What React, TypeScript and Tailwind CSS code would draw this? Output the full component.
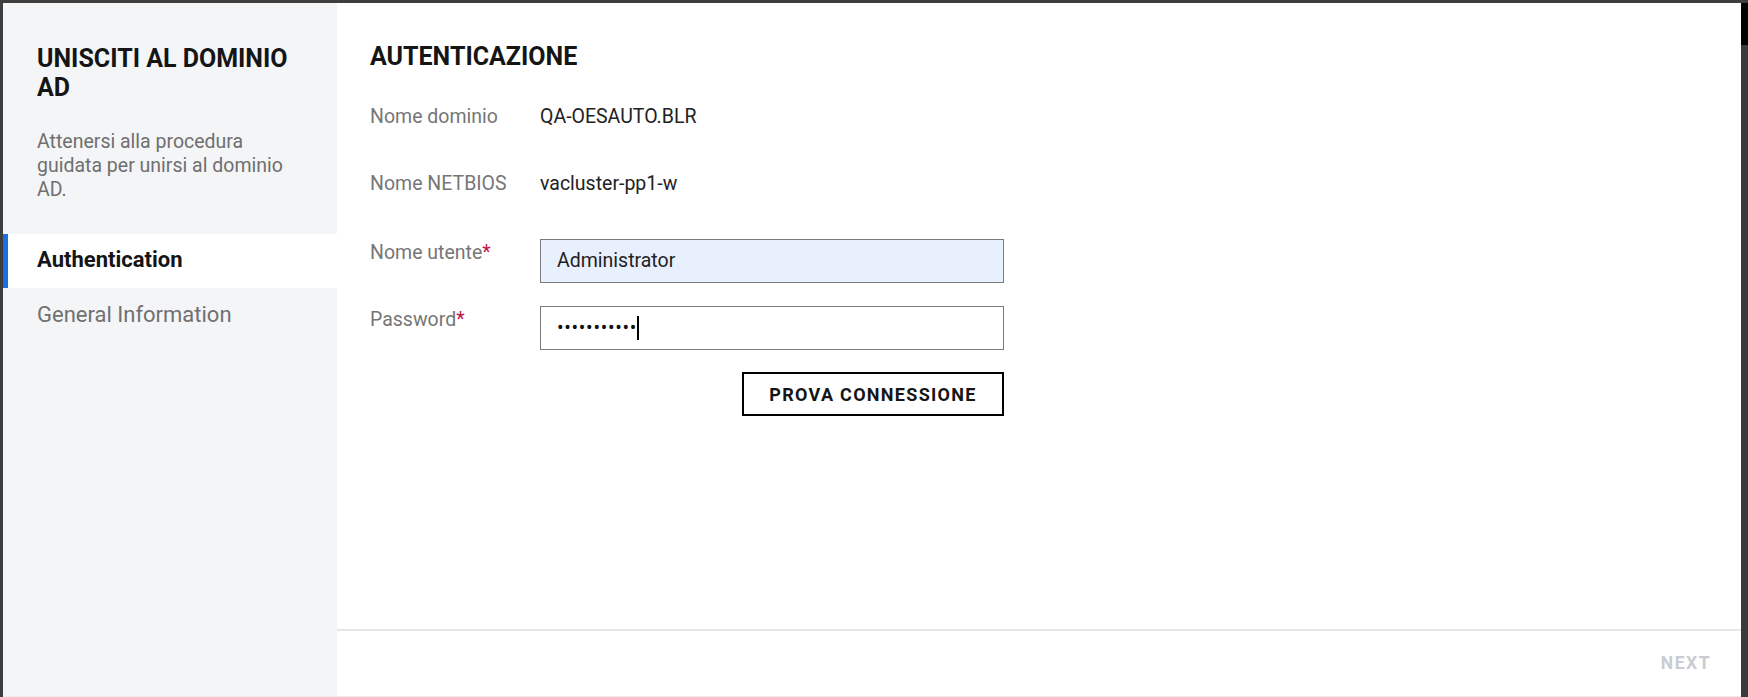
import React from "react";

export default function App() {
  return (
    <div className="w-[1748px] h-[697px] bg-[#3e3e3e] flex pt-[3px] pl-[3px] overflow-hidden" style={{ fontFamily: "Roboto, 'Liberation Sans', sans-serif" }}>
      <div className="flex w-[1738px] h-[694px] border-b border-[#ececec]">
        {/* Sidebar */}
        <aside className="w-[334px] h-full bg-[#f4f5f7] flex flex-col">
          <div className="pt-[41px] pl-[34px] pr-[30px]">
            <h1 className="text-[25px] leading-[29px] font-bold text-[#151515]">UNISCITI AL DOMINIO AD</h1>
            <p className="mt-[28px] text-[19.5px] leading-[24px] text-[#6f6f6f]">Attenersi alla procedura guidata per unirsi al dominio AD.</p>
          </div>
          <nav className="mt-[32px] flex flex-col">
            <div className="h-[54px] bg-white border-l-[5px] border-[#1b6fe0] pl-[29px] pb-[3px] flex items-center text-[22px] font-bold text-[#151515]">Authentication</div>
            <div className="h-[54px] pl-[34px] pb-[2px] flex items-center text-[22px] text-[#707070]">General Information</div>
          </nav>
        </aside>
        {/* Main */}
        <main className="flex-1 h-full bg-white flex flex-col">
          <div className="flex-1 pt-[40px] pl-[33px]">
            <h2 className="text-[25px] leading-[28px] font-bold text-[#151515]">AUTENTICAZIONE</h2>
            <div className="mt-[34px] flex flex-col gap-[43px] text-[19.5px] leading-[24px]">
              <div className="flex">
                <span className="w-[170px] text-[#767676]">Nome dominio</span>
                <span className="text-[#222]">QA-OESAUTO.BLR</span>
              </div>
              <div className="flex">
                <span className="w-[170px] text-[#767676]">Nome NETBIOS</span>
                <span className="text-[#222]">vacluster-pp1-w</span>
              </div>
            </div>
            <div className="mt-[43px] flex flex-col gap-[23px] text-[19.5px] leading-[24px]">
              <div className="flex">
                <span className="w-[170px] pt-[2px] text-[#767676]">Nome utente<span className="text-[#c0154b]">*</span></span>
                <div className="w-[464px] h-[44px] border border-[#7a7a7a] bg-[#e8f0fe] flex items-center pl-[16px] text-[#222]">Administrator</div>
              </div>
              <div className="flex">
                <span className="w-[170px] pt-[2px] text-[#767676]">Password<span className="text-[#c0154b]">*</span></span>
                <div className="w-[464px] h-[44px] border border-[#7a7a7a] bg-white flex items-center pl-[16px] text-[#111]">
                  <span className="tracking-[0.7px]">•••••••••••</span>
                  <span className="w-[1.5px] h-[24px] bg-black"></span>
                </div>
              </div>
            </div>
            <div className="mt-[22px] ml-[170px] w-[464px] flex justify-end">
              <button className="w-[262px] h-[44px] border-2 border-black bg-white text-[18px] font-bold tracking-[1.3px] text-[#151515]">PROVA CONNESSIONE</button>
            </div>
          </div>
          <div className="h-[67px] border-t-2 border-[#e6e6e6] flex items-center justify-end pr-[30px]">
            <span className="text-[17.5px] font-bold tracking-[1.5px] text-[#c9ccd1]">NEXT</span>
          </div>
        </main>
      </div>
      <div className="w-[7px] h-full flex flex-col">
        <div className="h-[42px] bg-black"></div>
        <div className="flex-1 bg-[#3a3a3a]"></div>
      </div>
    </div>
  );
}
